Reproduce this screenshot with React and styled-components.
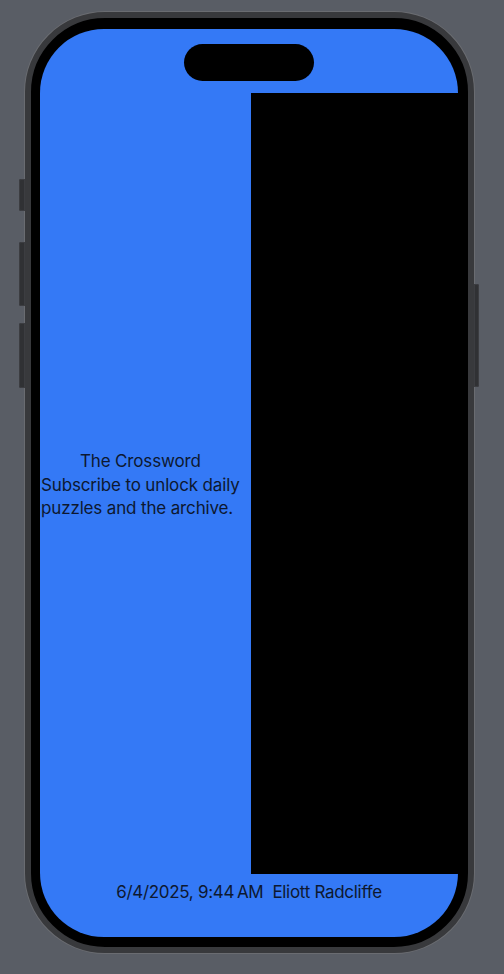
import React from "react";
import styled, { createGlobalStyle } from "styled-components";

const GlobalStyle = createGlobalStyle`
  html, body {
    margin: 0;
    padding: 0;
    background: #595d65;
  }
  body {
    font-family: Inter, "Noto Sans", "Liberation Sans", sans-serif;
  }
`;

const Stage = styled.div`
  width: 504px;
  height: 974px;
  padding: 12px 0 0 25px;
  box-sizing: border-box;
`;

const Phone = styled.div`
  position: relative;
  width: 449px;
  height: 941px;
  box-sizing: border-box;
  border: 6px solid #38393c;
  border-radius: 80px;
  background: #000;
  padding: 11px 10px 10px 9px;
  box-shadow: 0 0 0 1px #6a6c71;
`;

const SideButton = styled.div`
  position: absolute;
  top: ${(p) => p.top}px;
  height: ${(p) => p.h}px;
  width: ${(p) => (p.right ? 5 : 6)}px;
  ${(p) => (p.right ? "right: -11px;" : "left: -12px;")}
  background: #303134;
  border-radius: ${(p) => (p.right ? "0 2px 2px 0" : "2px 0 0 2px")};
  box-shadow: inset 0 0 0 1px #3c3d41;
`;

const Screen = styled.div`
  height: 100%;
  border-radius: 64px;
  background: #3479f6;
  overflow: hidden;
  display: flex;
  flex-direction: column;
  color: #0d1830;
  font-size: 17px;
  line-height: 23.5px;
`;

const TopBar = styled.div`
  height: 64px;
  flex-shrink: 0;
  display: flex;
  justify-content: center;
  padding-top: 15px;
  box-sizing: border-box;
`;

const Island = styled.div`
  width: 130px;
  height: 37px;
  border-radius: 19px;
  background: #000;
`;

const Main = styled.div`
  flex: 1;
  display: flex;
`;

const LeftColumn = styled.div`
  width: 211px;
  flex-shrink: 0;
  display: flex;
  flex-direction: column;
  align-items: flex-start;
  justify-content: center;
  padding: 4px 0 0 1px;
  box-sizing: border-box;
`;

const Title = styled.div`
  text-align: center;
  letter-spacing: -0.15px;
`;

const Body = styled.div`
  text-align: left;
  letter-spacing: -0.15px;
`;

const Panel = styled.div`
  flex: 1;
  background: #000;
`;

const Footer = styled.div`
  height: 63px;
  flex-shrink: 0;
  box-sizing: border-box;
  padding-top: 7px;
  text-align: center;
  letter-spacing: -0.3px;
  white-space: pre;
`;

export default function App() {
  return (
    <>
      <GlobalStyle />
      <Stage>
        <Phone>
          <SideButton top={161} h={32} />
          <SideButton top={224} h={64} />
          <SideButton top={305} h={65} />
          <SideButton right top={266} h={103} />
          <Screen>
            <TopBar>
              <Island />
            </TopBar>
            <Main>
              <LeftColumn>
                <div>
                  <Title>The Crossword</Title>
                  <Body>
                    Subscribe to unlock daily
                    <br />
                    puzzles and the archive.
                  </Body>
                </div>
              </LeftColumn>
              <Panel />
            </Main>
            <Footer>{"6/4/2025, 9:44\u2009AM  Eliott Radcliffe"}</Footer>
          </Screen>
        </Phone>
      </Stage>
    </>
  );
}
